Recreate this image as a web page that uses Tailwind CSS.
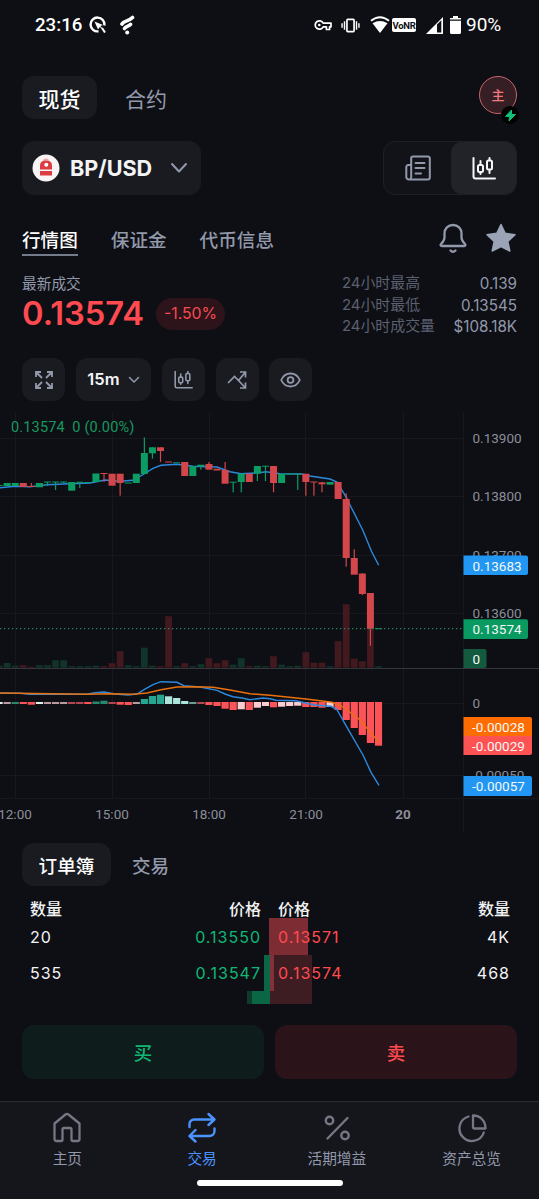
<!DOCTYPE html>
<html lang="zh-CN">
<head>
    <meta charset="UTF-8">
    <meta name="viewport" content="width=device-width, initial-scale=1.0">
    <title>BP/USD</title>
    <script src="https://cdn.jsdelivr.net/npm/@tailwindcss/browser@4"></script>
</head>
<body class="bg-[#0e0f14] font-[Inter,'Noto_Sans_CJK_SC',sans-serif] text-[#9299ab]">
    <div class="w-[539px] h-[1199px] flex flex-col overflow-hidden">
        <!-- Status bar -->
        <div class="h-[50px] px-[35px] flex items-center justify-between text-white font-[Roboto,sans-serif] text-[19px]">
            <div class="flex items-center">
                <span class="w-[54px] font-medium text-[18.700px]">23:16</span>
                <svg class="w-[17px] h-[17px]" viewBox="0 0 17 17" fill="none" stroke="#fff">
                    <path d="M9.500 15.300A6.900 6.900 0 1 1 15.300 9.500" stroke-width="2.400"/>
                    <path d="M5.500 5.500l8.500 3.500-2.600 1 4.600 5.500-5.200-4.500-1.800 2.500z" fill="#fff" stroke="none"/>
                    <path d="M13 12l3 4.500" stroke-width="2"/>
                </svg>
                <svg class="ml-[14px] w-[15px] h-[20px]" viewBox="0 0 15 20" fill="none" stroke="#fff" stroke-linecap="round" stroke-width="3.600">
                    <path d="M2 9C4 5.500 8 7 12.500 2.500M4.500 13.500c1.200-2.300 3.300-1.800 6-4.200"/>
                    <circle cx="7.200" cy="17.500" r="2" fill="#fff" stroke="none"/>
                </svg>
            </div>
            <div class="flex items-center">
                <svg class="w-[18px] h-[12px]" viewBox="0 0 18 12" fill="none" stroke="#fff" stroke-width="1.700">
                    <path d="M9.200 4.200H17v3.600h-1.400v2.700h-3.200V7.800H9.200A4.200 4.200 0 1 1 9.200 4.200z" stroke-linejoin="round"/>
                    <circle cx="5.300" cy="6" r="1.300" fill="#fff" stroke="none"/>
                </svg>
                <svg class="ml-[9px] w-[19px] h-[15px]" viewBox="0 0 20 16" fill="none" stroke="#fff" stroke-width="1.800">
                    <rect x="6.200" y="1.500" width="7.600" height="13" rx=".8"/>
                    <path d="M3.600 3.500v9M16.400 3.500v9M1 5.500v5M19 5.500v5" stroke-width="1.500"/>
                </svg>
                <svg class="ml-[10px] w-[20px] h-[18px]" viewBox="0 0 20 18" fill="none">
                    <path d="M1 4.800Q10-2.300 19 4.800" stroke="#fff" stroke-width="2"/>
                    <path d="M2.500 7.200Q10 2.800 17.500 7.200L10 17z" fill="#fff"/>
                </svg>
                <span class="ml-[2px] w-[24px] h-[14px] rounded-[2px] bg-white text-[#0e0f14] text-[9.500px] leading-[15px] font-bold flex justify-center tracking-[-0.3px]">VoNR</span>
                <svg class="ml-[10px] w-[17px] h-[17px]" viewBox="0 0 17 17">
                    <path d="M17 0v17H0z" fill="#fff"/>
                    <path d="M11 7.500l4.300-4.300v12.200H11z" fill="#0e0f14"/>
                </svg>
                <svg class="ml-[7px] w-[11px] h-[18px]" viewBox="0 0 11 18" fill="#fff">
                    <path d="M3 0h5v2h3v1.500H0V2h3zM0 4.800h11V16.500a1.500 1.500 0 0 1-1.500 1.500h-8A1.500 1.500 0 0 1 0 16.500z"/>
                </svg>
                <span class="ml-[5px] w-[38px]">90%</span>
            </div>
        </div>

        <!-- Market type -->
        <div class="mt-[26px] px-[22px] h-[43px] flex items-center justify-between">
            <div class="flex items-center text-[21px]">
                <div class="w-[75px] h-[43px] pt-[5px] rounded-[12px] bg-[#1a1b20] text-white font-medium flex items-center justify-center">现货</div>
                <div class="ml-[28px] pt-[5px]">合约</div>
            </div>
            <div class="relative w-[38px] h-[38px] mb-[5px] pt-[2px] rounded-full border border-[#c9656c] bg-[#351e24] text-[#f4797f] text-[13px] font-medium flex items-center justify-center">主
                <span class="absolute left-[21px] top-[29px] w-[18px] h-[18px] rounded-full bg-black flex items-center justify-center">
                    <svg class="w-[13px] h-[13px]" viewBox="0 0 13 13" fill="#12c07a" stroke="#12c07a" stroke-linejoin="round"><path d="M7.500 1L1.500 7.500h4L5 12l6.500-6.500h-4z"/></svg>
                </span>
            </div>
        </div>

        <!-- Pair selector -->
        <div class="mt-[22px] px-[22px] flex justify-between">
            <div class="w-[179px] h-[54px] rounded-[12px] bg-[#1a1b20] pl-[10px] flex items-center">
                <svg class="w-[28px] h-[28px]" viewBox="0 0 28 28">
                    <circle cx="14" cy="14" r="13.500" fill="#f8f4f5"/>
                    <path d="M10.500 6.500Q14 2.500 17.500 6.500z" fill="#eda4a5"/>
                    <path d="M8 15.500V11.500q0-5 6-5t6 5v4zM8 17h12v4.500H8z" fill="#dc3d42"/>
                    <circle cx="14.300" cy="10.800" r="2" fill="#fff"/>
                </svg>
                <span class="ml-[10px] w-[82px] pt-px text-[21.600px] font-bold text-[#f3f4f6] whitespace-nowrap">BP/USD</span>
                <svg class="ml-[18px] w-[18px] h-[12px]" viewBox="0 0 18 12" fill="none" stroke="#9299ab" stroke-width="2" stroke-linecap="round" stroke-linejoin="round"><path d="M2 2l7 7.500L16 2"/></svg>
            </div>
            <div class="w-[134px] h-[54px] rounded-[12px] border border-[#1f2026] bg-[#121318] flex">
                <div class="flex-1 flex items-center justify-center">
                    <svg class="w-[26px] h-[26px]" viewBox="0 0 26 26" fill="none" stroke="#9299ab" stroke-width="2" stroke-linecap="round" stroke-linejoin="round">
                        <path d="M6.200 22.500V3.300a1.800 1.800 0 0 1 1.800-1.800h15a1.800 1.800 0 0 1 1.800 1.800v19.200a2 2 0 0 1-2 2H4a2.500 2.500 0 0 1-2.700-2.500V12a2 2 0 0 1 2-2h2.500M6.200 22.500q0 1.500-1.700 2"/>
                        <path d="M10.500 8h9M10.500 13h9M10.500 18.500h5.500"/>
                    </svg>
                </div>
                <div class="w-[65px] rounded-[11px] bg-[#222328] flex items-center justify-center">
                    <svg class="w-[24px] h-[24px]" viewBox="0 0 24 24" fill="none" stroke="#f5f6f8" stroke-width="2" stroke-linecap="round" stroke-linejoin="round">
                        <path d="M1.500 2v18.500a2 2 0 0 0 2 2H23"/>
                        <rect x="6" y="9" width="5" height="7" rx="1.500"/><path d="M8.500 5v4M8.500 16v2"/>
                        <rect x="15" y="4.500" width="5" height="9" rx="1.500"/><path d="M17.500 2v2M17.500 14v3"/>
                    </svg>
                </div>
            </div>
        </div>

        <!-- Page tabs -->
        <div class="mt-[27px] px-[22px] h-[34px] flex justify-between">
            <div class="flex text-[18.600px] leading-[36px] font-medium">
                <div class="h-[34px] border-b-2 border-[#747b8a] text-white">行情图</div>
                <div class="ml-[33px]">保证金</div>
                <div class="ml-[33px]">代币信息</div>
            </div>
            <div class="flex">
                <svg class="w-[28px] h-[32px]" viewBox="0 0 28 32" fill="none" stroke="#9299ab" stroke-width="2.300" stroke-linecap="round" stroke-linejoin="round">
                    <path d="M14 3c-5 0-8.500 3.500-8.500 8.500v4c0 3-1.500 4.500-3.500 6.500-.8.800-.4 2 .8 2h22.400c1.200 0 1.600-1.200.8-2-2-2-3.500-3.500-3.500-6.500v-4C22.500 6.500 19 3 14 3z"/>
                    <path d="M11.500 28.500q2.500 2.500 5 0"/>
                </svg>
                <svg class="ml-[18px] w-[32px] h-[31px]" viewBox="0 0 32 31" fill="#9aa4b6" stroke="#9aa4b6" stroke-width="1.500" stroke-linejoin="round"><path d="M16 2.500l4.200 8.800 9.800 1.500-7.200 6.700 2 9.500-8.800-4.500L7.200 29l2-9.500L2 12.800l9.800-1.500z"/></svg>
            </div>
        </div>

        <!-- Last price and 24h stats -->
        <div class="mt-[17px] px-[22px] h-[65px] flex justify-between">
            <div>
                <div class="text-[14.700px] leading-[22px]">最新成交</div>
                <div class="flex items-center h-[38px]">
                    <span class="w-[134px] text-[32.700px] font-semibold text-[#ff4a4f]">0.13574</span>
                    <span class="w-[69px] h-[32px] rounded-full bg-[#2c141a] text-[15.800px] text-[#f84a50] flex items-center justify-center">-1.50%</span>
                </div>
            </div>
            <div class="grid grid-cols-[110px_65px] text-[14.900px] leading-[21.700px] content-start whitespace-nowrap">
                <span class="text-[#5c6070]">24小时最高</span><span class="text-right text-[15.200px]">0.139</span>
                <span class="text-[#5c6070]">24小时最低</span><span class="text-right text-[15.200px]">0.13545</span>
                <span class="text-[#5c6070]">24小时成交量</span><span class="flex justify-end text-[15.200px]">$108.18K</span>
            </div>
        </div>

        <!-- Chart tools -->
        <div class="mt-[20px] px-[22px] flex gap-[10.700px]">
            <div class="w-[43px] h-[43px] rounded-[12px] bg-[#1a1b20] flex items-center justify-center">
                <svg class="w-[20px] h-[20px]" viewBox="0 0 20 20" fill="none" stroke="#9299ab" stroke-width="1.800"><path d="M2 7V2h5M2 2l6 6M13 2h5v5M18 2l-6 6M2 13v5h5M2 18l6-6M18 13v5h-5M18 18l-6-6"/></svg>
            </div>
            <div class="w-[75.500px] h-[43px] rounded-[12px] bg-[#1a1b20] flex items-center justify-center text-[#f3f4f6] text-[16.500px] font-semibold">15m
                <svg class="ml-[8px] w-[12px] h-[8px]" viewBox="0 0 12 8" fill="none" stroke="#9299ab" stroke-width="1.500" stroke-linecap="round"><path d="M1.500 1.500L6 6l4.500-4.500"/></svg>
            </div>
            <div class="w-[43px] h-[43px] rounded-[12px] bg-[#1a1b20] flex items-center justify-center">
                <svg class="w-[19px] h-[19px]" viewBox="0 0 24 24" fill="none" stroke="#9299ab" stroke-width="2" stroke-linecap="round" stroke-linejoin="round">
                    <path d="M1.500 2v18.500a2 2 0 0 0 2 2H23"/>
                    <rect x="6" y="9" width="5" height="7" rx="1.500"/><path d="M8.500 5v4M8.500 16v2"/>
                    <rect x="15" y="4.500" width="5" height="9" rx="1.500"/><path d="M17.500 2v2M17.500 14v3"/>
                </svg>
            </div>
            <div class="w-[43px] h-[43px] rounded-[12px] bg-[#1a1b20] flex items-center justify-center">
                <svg class="w-[20px] h-[20px]" viewBox="0 0 20 20" fill="none" stroke="#9299ab" stroke-width="1.700"><path d="M1 13l6.500-6.500 4 4L18.500 2M13 2h5.500v5.500M11.500 10.500l7 7.500M18.500 12.500V18H13"/></svg>
            </div>
            <div class="w-[43px] h-[43px] rounded-[12px] bg-[#1a1b20] flex items-center justify-center">
                <svg class="w-[21px] h-[16px]" viewBox="0 0 21 16" fill="none" stroke="#9299ab" stroke-width="1.800"><path d="M1.200 8C3 4 6.500 1.500 10.500 1.500S18 4 19.800 8c-1.800 4-5.300 6.500-9.300 6.500S3 12 1.200 8z"/><circle cx="10.500" cy="8" r="2.900"/></svg>
            </div>
        </div>

        <!-- Price, volume and MACD chart -->
        <svg class="mt-[11px] w-[539px] h-[420px] shrink-0 font-[Roboto,sans-serif]" viewBox="0 412 539 420">
            <g stroke="#17181d">
                <path d="M15.500 412V798M112.500 412V798M209.500 412V798M305.500 412V798M403.500 412V798M463.500 412V832M0 438.500H463M0 496.500H463M0 555.500H463M0 613.500H463M0 703.500H463M0 775.500H463M0 798.500H539"/>
            </g>
            <g id="volume"></g>
            <path d="M0 668.500H539" stroke="#34363b"/>
            <path d="M0 487.700L15 486.300 30 486.700 47 484.700 63 484 90 483 105 480 120 481.300 133 480.300 144 474 153 468.300 161 465.300 177 464.300 193 466.300 217 467 230 471.700 241 473.700 257 473 266 471.700 280 473.700 302 474 310 476 330 479 337 482 346.300 497.300 350 505 362.700 530 371.700 551.700 378.700 565.300" fill="none" stroke="#2d89dc" stroke-width="1.400"/>
            <g id="candles"></g>
            <path d="M0 628.700H463" stroke="#2d8560" stroke-width="1.300" stroke-dasharray="1.300 2.700"/>
            <g id="macd"></g>
            <path d="M0 693.300H20L30 694.300H87L95 692.700 104 692 115 694 128 695 137 694 144 689.700 153 684.700 161 681.700 177 682.300 184 685.700 200 687 217 690.300 225 694 233 696.700 242 698 250 699.700 263 698 270 698.700 276 700.300 296 700.700 314 705 331 706.300 337 709.700 346 725.700 363 755 371 772.300 379 785.300" fill="none" stroke="#2d89dc" stroke-width="1.400"/>
            <path d="M0 693L87 694.300 110 693.700 133 694.300 147 693 161 689.700 177 687 195 686.700 213 687.300 230 690 250 693.700 270 695.300 306 699 332 702.300 342 706.300 359 719 379 742.300" fill="none" stroke="#e8710f" stroke-width="1.400"/>
            <text x="11" y="431.800" font-size="14.500" letter-spacing=".16" fill="#16995f" xml:space="preserve">0.13574  0 (0.00%)</text>
            <g font-size="13.500" fill="#8b8e99">
                <text x="472.500" y="442.500">0.13900</text>
                <text x="472.500" y="501">0.13800</text>
                <text x="472.500" y="559.700">0.13700</text>
                <text x="472.500" y="618.400">0.13600</text>
                <text x="472.500" y="708">0</text>
                <text x="471.500" y="780">-0.00050</text>
                <g text-anchor="middle">
                    <text x="15" y="818.800">12:00</text>
                    <text x="112" y="818.800">15:00</text>
                    <text x="209" y="818.800">18:00</text>
                    <text x="306" y="818.800">21:00</text>
                    <text x="403" y="818.800" font-weight="700">20</text>
                </g>
            </g>
            <path d="M463.500 555.500H526a2 2 0 0 1 2 2V573a2 2 0 0 1-2 2H463.500z" fill="#2196f3"/>
            <path d="M463.500 619.300H526a2 2 0 0 1 2 2V637a2 2 0 0 1-2 2H463.500z" fill="#089a60"/>
            <path d="M463.500 649H484.500a2 2 0 0 1 2 2V666a2 2 0 0 1-2 2H463.500z" fill="#135a3e"/>
            <path d="M463.500 717H530a2 2 0 0 1 2 2V736H463.500z" fill="#ff6d00"/>
            <path d="M463.500 736H532V753a2 2 0 0 1-2 2H463.500z" fill="#ff5252"/>
            <path d="M463.500 776H530a2 2 0 0 1 2 2V794a2 2 0 0 1-2 2H463.500z" fill="#2196f3"/>
            <g font-size="13.500" fill="#f4f8f8">
                <text x="472.500" y="570.500">0.13683</text>
                <text x="472.500" y="634.400">0.13574</text>
                <text x="472.500" y="664">0</text>
                <text x="472" y="731.700">-0.00028</text>
                <text x="472" y="750.700">-0.00029</text>
                <text x="472" y="791">-0.00057</text>
            </g>
        </svg>

        <!-- Order book tabs -->
        <div class="mt-[11px] px-[22px] h-[43px] flex items-center text-[18.600px] font-medium">
            <div class="w-[89px] h-[43px] pt-[4px] rounded-[12px] bg-[#1a1b20] text-white flex items-center justify-center">订单簿</div>
            <div class="ml-[21px] pt-[4px]">交易</div>
        </div>

        <!-- Order book -->
        <div class="relative mt-[13px] h-[105px] text-[16px] text-[#f3f4f6]">
            <div class="absolute inset-x-0 top-[19px]">
                <svg class="w-[539px] h-[86px]" viewBox="0 918 539 86" shape-rendering="crispEdges">
                    <path d="M269 918h39v37h-39z" fill="#7e2c34"/>
                    <path d="M269 955h43v49h-43z" fill="#3d1c22"/>
                    <path d="M264 955h6v49h-6zM252 991h12v13h-12z" fill="#0a6644"/>
                    <path d="M247 991h5v13h-5z" fill="#0f3b2e"/>
                    <path d="M270 955h4v36h-4z" fill="#83303a"/>
                </svg>
            </div>
            <div class="relative px-[30px] grid grid-cols-[115px_116px_17px_115px_117px] tracking-[1px]">
                <div class="leading-[20px] font-medium tracking-normal">数量</div><div class="leading-[20px] font-medium tracking-normal text-right">价格</div><div></div><div class="leading-[20px] font-medium tracking-normal">价格</div><div class="leading-[20px] font-medium tracking-normal text-right">数量</div>
                <div class="leading-[36px]">20</div><div class="leading-[36px] text-right text-[#10b874]">0.13550</div><div></div><div class="leading-[36px] text-[#ff4a4f]">0.13571</div><div class="leading-[36px] text-right">4K</div>
                <div class="leading-[36px]">535</div><div class="leading-[36px] text-right text-[#10b874]">0.13547</div><div></div><div class="leading-[36px] text-[#ff4a4f]">0.13574</div><div class="leading-[36px] text-right">468</div>
            </div>
        </div>

        <!-- Buy / sell -->
        <div class="mt-[21px] px-[22px] flex gap-[11px] text-[18.500px] font-medium">
            <div class="flex-1 h-[54px] pt-[4px] rounded-[12px] bg-[#0f1c1c] text-[#10b874] flex items-center justify-center">买</div>
            <div class="flex-1 h-[54px] pt-[4px] rounded-[12px] bg-[#2a1419] text-[#ff4a4f] flex items-center justify-center">卖</div>
        </div>

        <!-- Bottom navigation -->
        <div class="mt-[22px] h-[98px] border-t border-[#2b2c32] bg-[#15161b] flex flex-col items-center">
            <div class="w-full h-[78px] shrink-0 grid grid-cols-4 text-[14.700px]">
                <div class="pt-[10px] flex flex-col items-center gap-[6px]">
                    <svg class="w-[30px] h-[31px]" viewBox="0 0 30 31" fill="none" stroke="#767685" stroke-width="2.300" stroke-linejoin="round"><path d="M2.500 11.500L13.500 2.500q1.500-1.200 3 0L27.500 11.500V27a2 2 0 0 1-2 2h-5a1 1 0 0 1-1-1V17.500a1.500 1.500 0 0 0-1.500-1.500h-6a1.500 1.500 0 0 0-1.500 1.500V28a1 1 0 0 1-1 1h-5a2 2 0 0 1-2-2z"/></svg>
                    <span class="leading-[20px]">主页</span>
                </div>
                <div class="pt-[10px] flex flex-col items-center gap-[6px] text-[#4b93ff]">
                    <svg class="w-[30px] h-[31px]" viewBox="0 0 30 31" fill="none" stroke="#4b93ff" stroke-width="2.400" stroke-linecap="round" stroke-linejoin="round"><path d="M2.500 15V12a4.500 4.500 0 0 1 4.500-4.500H27.500M21.500 2l6 5.500-6 5.500M27.500 16.500v2.500a5 5 0 0 1-5 5H2.500M8.500 18l-6 6 6 5.500"/></svg>
                    <span class="leading-[20px]">交易</span>
                </div>
                <div class="pt-[10px] flex flex-col items-center gap-[6px]">
                    <svg class="w-[30px] h-[31px]" viewBox="0 0 30 31" fill="none" stroke="#767685" stroke-width="2.400" stroke-linecap="round"><path d="M25.500 6L5.500 26.500"/><circle cx="7.500" cy="8.500" r="3.700"/><circle cx="23" cy="23.500" r="3.700"/></svg>
                    <span class="leading-[20px]">活期增益</span>
                </div>
                <div class="pt-[10px] flex flex-col items-center gap-[6px]">
                    <svg class="w-[30px] h-[31px]" viewBox="0 0 30 31" fill="none" stroke="#767685" stroke-width="2.300" stroke-linecap="round" stroke-linejoin="round"><path d="M11.500 4.500A12.500 12.500 0 1 0 26.800 20.500"/><path d="M16 3.500V15a1.500 1.500 0 0 0 1.500 1.500h11C28.500 9 23.500 3.500 16 3.500z"/></svg>
                    <span class="leading-[20px]">资产总览</span>
                </div>
            </div>
            <div class="w-[146px] h-[6px] shrink-0 rounded-full bg-white"></div>
        </div>
    </div>
    <script>
        const STEP = 8.073;
        const FIRST = -2;
        const X0 = 15.2;
        const green = '#0b9d63';
        const red = '#d3474c';

        // [up, body top, body bottom, wick top, wick bottom, volume]
        const bars = [
          [1, 485, 486, 485, 486, 2], [1, 483, 486, 483, 486, 4.7], [1, 483, 486, 483, 486, 2],
          [0, 483, 487, 483, 487, 2.5], [0, 486, 487, 483, 487, 1], [1, 483, 487.3, 483, 487, 2.5],
          [1, 481.5, 482.5, 482, 486, 2.5], [1, 481.5, 482.5, 482, 490, 7.5], [1, 481.5, 482.5, 482, 483, 7.5],
          [1, 482, 490.7, 482, 490, 1.5], [1, 481.7, 482.7, 482, 488, 1.5], [1, 482, 483, 482, 483, 1.5],
          [1, 473.5, 482, 474, 482, 2], [0, 473, 474, 473, 482, 1.5], [0, 473.7, 485.7, 474, 485, 4.5],
          [0, 473.7, 483, 474, 495.7, 16.5], [1, 482.5, 483.5, 483, 483, 2.5], [1, 473.7, 483, 474, 483, 1.5],
          [1, 453, 474, 437.5, 474, 20], [1, 447.3, 453.3, 447.3, 458.7, 2], [0, 447.3, 451, 447.3, 462, 1.5],
          [0, 461.5, 462.5, 462, 462, 51.5], [1, 462.3, 463.3, 463, 463, 1.5], [0, 462, 476, 462, 476, 4.5],
          [1, 466, 476, 466, 476, 1.5], [1, 464.7, 466.3, 465, 469.7, 3.5], [0, 464, 469.7, 462, 469, 9.5],
          [0, 468.7, 470.5, 469, 470, 4.5], [0, 470, 483.7, 462, 483, 7.5], [1, 481.7, 482.7, 482, 492.3, 3],
          [1, 473.7, 482, 474, 492.3, 9.5], [0, 473.7, 482, 474, 482, 1.5], [1, 466, 473.7, 466, 481, 2],
          [1, 465.7, 466.7, 466, 481, 1.5], [0, 466, 483, 466, 492.3, 11.5], [1, 473.7, 483, 474, 483, 3],
          [1, 473.5, 474.5, 474, 474, 1.5], [1, 473.5, 474.5, 474, 490, 2], [0, 473.7, 482, 474, 495.7, 15.5],
          [0, 481.5, 482.5, 482, 495.7, 5], [0, 482.3, 484.3, 482, 492.3, 5], [1, 482, 484.7, 482, 484, 1.5],
          [0, 482, 499, 482, 499, 26.5], [0, 499, 558, 493.3, 566.7, 63.5], [0, 558, 574.7, 549.3, 574, 9],
          [0, 573.5, 594, 573.5, 595, 6.5], [0, 593, 628.7, 593, 645.7, 45], [1, 628.2, 629.2, 629, 629, 1.5],
        ];

        const G = '#26a690', g = '#ace5dc', m = '#6f9c9a', R = '#fb5357', r = '#fcccd0', D = '#b14a50', P = '#b99a9f', W = '#e4ece9';
        // [colour, top, bottom]
        const hist = [
          [W, 702, 704], [P, 702, 704], ['#27876f', 702, 704], [R, 702, 704], [R, 702, 704.7], [W, 702, 704],
          [P, 702, 704], [P, 702, 704], [P, 702, 704], [D, 702, 704], [D, 702, 704], [R, 702, 704],
          ['#27876f', 701.5, 704], ['#27876f', 700.7, 704], [D, 702, 704], [R, 702, 704.7], [R, 702, 705], [P, 702, 704],
          [G, 699, 704], [G, 696, 704], [G, 694.7, 704], [g, 696.3, 704], [g, 698, 704], [g, 701, 704],
          [m, 702, 704], [D, 702, 704], [R, 702, 705], [R, 702, 706], [R, 702, 708.7], [R, 702, 710],
          [r, 702, 709.3], [R, 702, 710], [r, 702, 707.7], [r, 702, 706], [R, 702, 707.3], [r, 702, 706.7],
          [r, 702, 706], [r, 702, 705.7], [R, 702, 707], [R, 702, 707], [R, 702, 707.7], [r, 702, 707],
          [R, 702, 710], [R, 702, 720], [R, 702, 728], [R, 702, 735], [R, 702, 743], [R, 702, 745.7],
        ];

        const rect = (x, y, w, h, fill) => `<rect x="${x}" y="${y}" width="${w}" height="${h}" fill="${fill}"/>`;
        let candles = '', volume = '', macd = '';
        bars.forEach(([up, top, bottom, high, low, vol], i) => {
          const x = X0 + (i + FIRST) * STEP;
          const fill = up ? green : red;
          candles += rect(x - 3.5, top, 7, bottom - top, fill) + rect(x - 0.6, high, 1.2, low - high, fill);
          volume += rect(x - 3.4, 667.7 - vol, 6.8, vol, up ? '#12332a' : '#42191e');
          const [color, y1, y2] = hist[i];
          macd += rect(x - 3.6, y1, 7.2, y2 - y1, color);
        });
        document.getElementById('candles').innerHTML = candles;
        document.getElementById('volume').innerHTML = volume;
        document.getElementById('macd').innerHTML = macd;
    </script>
</body>
</html>
